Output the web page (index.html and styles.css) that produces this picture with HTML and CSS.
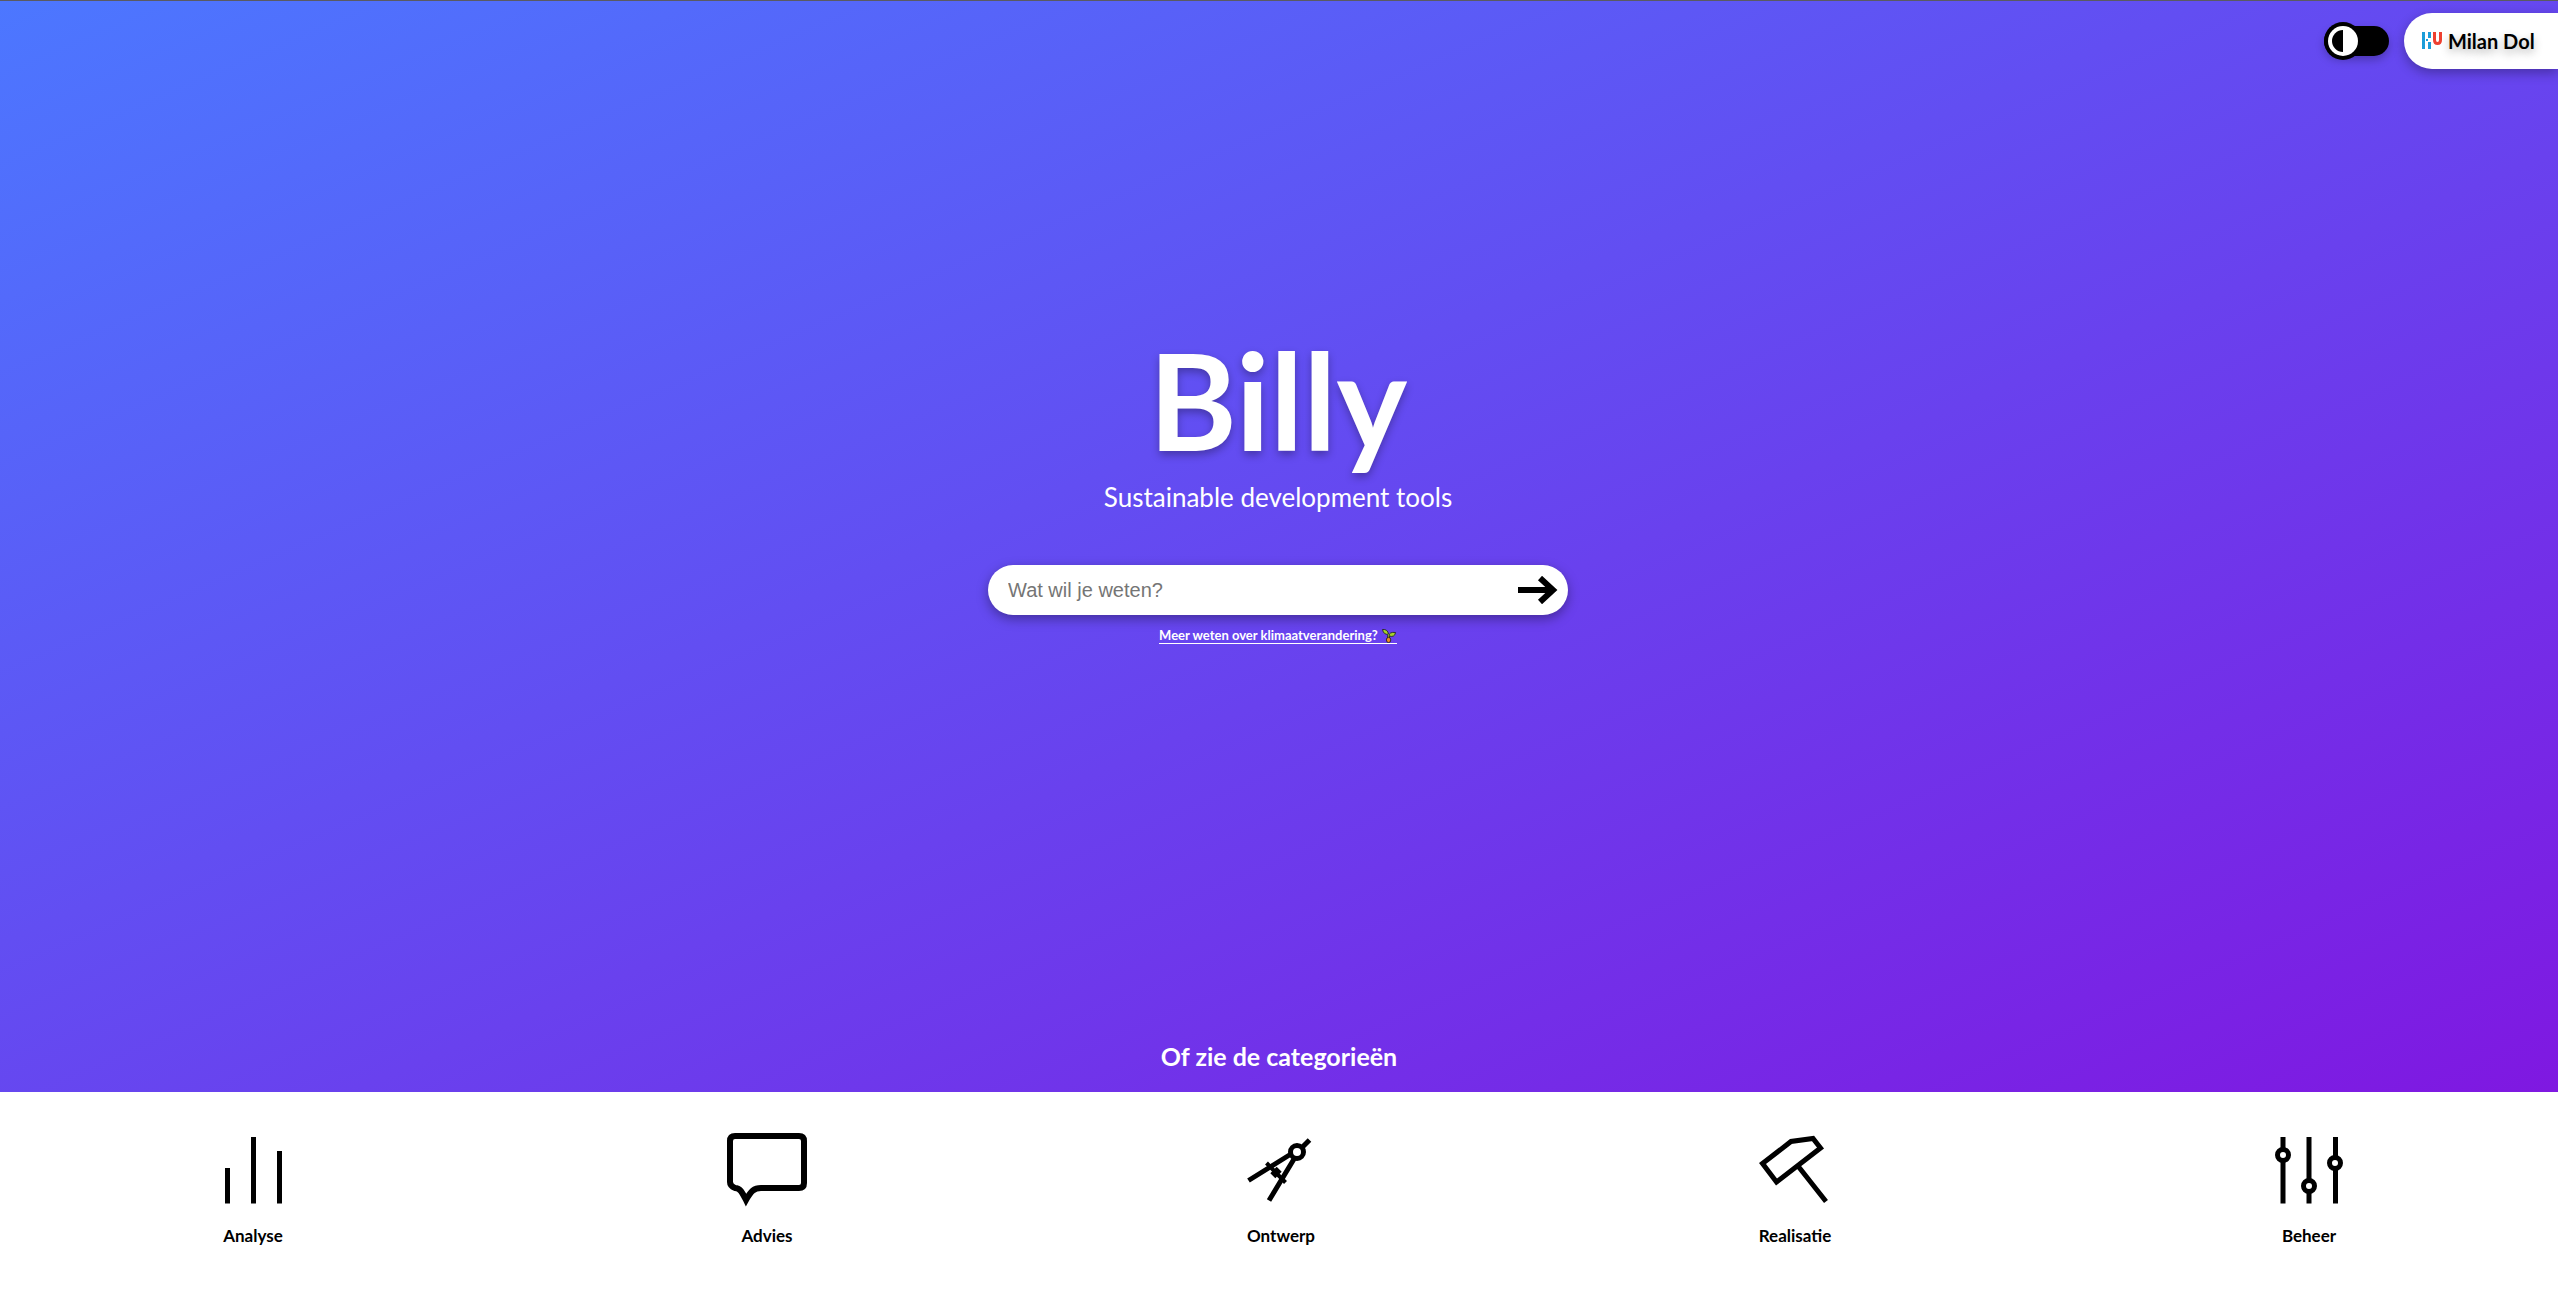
FILE: index.html
```html
<!DOCTYPE html>
<html lang="nl">
<head>
<meta charset="utf-8">
<title>Billy</title>
<meta name="viewport" content="width=device-width, initial-scale=1">
<link rel="stylesheet" href="styles.css">
</head>
<body>
<div class="hero">
  <header class="topbar">
    <label class="toggle">
      <input class="toggle-input" type="checkbox" aria-label="Contrast">
      <svg class="toggle-knob" viewBox="0 0 38 38" aria-hidden="true">
        <circle cx="19" cy="19" r="19"/>
        <circle cx="19" cy="19" r="15" fill="#fff"/>
        <path d="M19 8a11 11 0 0 0 0 22z"/>
      </svg>
    </label>
    <button class="user" type="button">
      <svg class="user-logo" viewBox="0 0 20 18" aria-hidden="true">
        <path d="M0 0h3v17H0zM6 0h3v6H6zM4 7h2v2H4zM6 10h3v7H6z" fill="#1b9dd9"/>
        <path d="M12.500 0v8q0 3.500 3 3.500t3-3.500V0" fill="none" stroke="#ee4030" stroke-width="3"/>
      </svg>
      <span>Milan Dol</span>
    </button>
  </header>
  <main class="intro">
    <h1 class="title">Billy</h1>
    <p class="tagline">Sustainable development tools</p>
    <form class="search">
      <input class="search-input" type="text" placeholder="Wat wil je weten?" aria-label="Wat wil je weten?">
      <button class="search-button" type="button" aria-label="Zoek">
        <svg class="arrow" viewBox="0 0 40 28" aria-hidden="true">
          <path d="M0 14h35M22 2l13 12-13 12" fill="none" stroke="#000" stroke-width="6"/>
        </svg>
      </button>
    </form>
    <a class="more" href="#klimaat">Meer weten over klimaatverandering? <svg class="seedling" viewBox="0 0 16 16" aria-hidden="true">
        <path d="M7.500 12V7" stroke="#222" stroke-width="3"/>
        <path d="M.5.500q6-.5 7 5.500Q2 7 .5.500zM8 8q0-5 7.500-4-1 6-7.500 4z" fill="#a5d32a" stroke="#222"/>
        <path d="M7.500 12V6" stroke="#8fbf26"/>
        <ellipse cx="7.500" cy="12.500" rx="2.500" ry="3" fill="#f08a24" stroke="#222"/>
      </svg></a>
  </main>
  <h2 class="subtitle">Of zie de categorieën</h2>
</div>
<nav class="categories">
  <a class="category" href="#analyse">
    <svg class="category-icon" viewBox="0 0 96 76" aria-hidden="true">
      <path d="M22.500 36v35.500M48.500 5v66.500M74.500 19v52.500"/>
    </svg>
    <span>Analyse</span>
  </a>
  <a class="category" href="#advies">
    <svg class="category-icon" viewBox="0 0 96 76" aria-hidden="true">
      <path stroke-width="6" d="M16 4H80Q85 4 85 9V51Q85 56 80 56H42C35 56 32 59 27 68C23 60 21 56 16 56Q11 54 11 50V9Q11 4 16 4z"/>
    </svg>
    <span>Advies</span>
  </a>
  <a class="category" href="#ontwerp">
    <svg class="category-icon" viewBox="0 0 96 76" aria-hidden="true">
      <path d="M76.500 8L69 15.500M58 22L15.500 48.500M61 27L36 68.500"/>
      <path stroke-width="4" d="M33.500 31L52.500 50.500"/>
      <path stroke-width="9" d="M40.500 38L45.500 43"/>
      <circle cx="64" cy="20" r="6.500" fill="#fff"/>
    </svg>
    <span>Ontwerp</span>
  </a>
  <a class="category" href="#realisatie">
    <svg class="category-icon" viewBox="0 0 96 76" aria-hidden="true">
      <path d="M15.500 31.500L44 9.500L66 6.500L73.500 16L29.500 50zM51 34L79 69.500"/>
    </svg>
    <span>Realisatie</span>
  </a>
  <a class="category" href="#beheer">
    <svg class="category-icon" viewBox="0 0 96 76" aria-hidden="true">
      <path d="M22 5v66.500M48 5v66.500M74.500 5v66.500"/>
      <g fill="#fff">
        <circle cx="22" cy="23" r="5.500"/>
        <circle cx="48" cy="54" r="5.500"/>
        <circle cx="74" cy="31" r="5.500"/>
      </g>
    </svg>
    <span>Beheer</span>
  </a>
</nav>
</body>
</html>
```
FILE: styles.css
```css
* { box-sizing: border-box; }

body {
  margin: 0;
  min-height: 100vh;
  display: flex;
  flex-direction: column;
  font-family: Lato, "Open Sans", sans-serif;
  color: #000;
  background: #fff;
}

.hero {
  flex: 1;
  display: flex;
  flex-direction: column;
  border-top: 1px solid #5a5a62;
  background: linear-gradient(to bottom right, #4c77ff, #7f18e1);
  color: #fff;
}

.topbar {
  display: flex;
  justify-content: flex-end;
  align-items: center;
  gap: 15px;
  padding-top: 12px;
}

.toggle {
  display: flex;
  align-items: center;
  width: 65px;
  height: 30px;
  border-radius: 15px;
  background: #000;
  box-shadow: 0 4px 8px rgba(0, 0, 0, 0.25);
  cursor: pointer;
}

.toggle-input {
  width: 0;
  height: 0;
  margin: 0;
  appearance: none;
}

.toggle-knob {
  flex: none;
  width: 38px;
  height: 38px;
}

.user {
  display: flex;
  align-items: center;
  gap: 6px;
  width: 154px;
  height: 56px;
  padding: 0 0 0 18px;
  border: 0;
  border-radius: 28px 0 0 28px;
  background: #fff;
  color: #000;
  font: 700 20px/24px Lato, "Open Sans", sans-serif;
  white-space: nowrap;
  text-shadow: 0 4px 8px rgba(0, 0, 0, 0.3);
  box-shadow: 0 4px 12px rgba(0, 0, 0, 0.3);
}

.user-logo {
  width: 20px;
  height: 18px;
}

.intro {
  flex: 1;
  display: flex;
  flex-direction: column;
  align-items: center;
  justify-content: center;
  padding: 0 18px 144px 16px;
}

.title {
  margin: 0 0 4px;
  font-size: 134px;
  line-height: 154px;
  font-weight: 700;
  text-shadow: 0 4px 8px rgba(0, 0, 0, 0.3);
}

.tagline {
  margin: 0;
  font-size: 26px;
  line-height: 32px;
}

.search {
  display: flex;
  align-items: center;
  width: 100%;
  max-width: 580px;
  height: 50px;
  margin-top: 52px;
  padding: 0 10px 0 20px;
  border-radius: 25px;
  background: #fff;
  box-shadow: 0 4px 12px rgba(0, 0, 0, 0.35);
}

.search-input {
  flex: 1;
  min-width: 0;
  padding: 0;
  border: 0;
  outline: 0;
  background: none;
  font: 20px/24px "Liberation Sans", Arial, sans-serif;
}

.search-input::placeholder { color: #757575; }

.search-button {
  padding: 0;
  border: 0;
  background: none;
}

.arrow {
  display: block;
  width: 40px;
  height: 28px;
}

.more {
  margin-top: 12px;
  border-bottom: 1px solid #fff;
  color: #fff;
  font-size: 13px;
  line-height: 16px;
  font-weight: 700;
  text-decoration: none;
}

.seedling {
  width: 16px;
  height: 14px;
  fill: none;
  vertical-align: -3px;
}

.subtitle {
  margin: 0;
  padding-bottom: 22px;
  text-align: center;
  font-size: 25px;
  line-height: 28px;
}

.categories {
  display: flex;
  justify-content: space-between;
  padding: 40px 201px 48px 205px;
}

.category {
  display: flex;
  flex-direction: column;
  align-items: center;
  gap: 16px;
  color: #000;
  font-size: 17px;
  line-height: 24px;
  font-weight: 700;
  text-decoration: none;
}

.category-icon {
  width: 96px;
  height: 76px;
  fill: none;
  stroke: #000;
  stroke-width: 5;
}

@media (max-width: 1000px) {
  .categories {
    flex-wrap: wrap;
    justify-content: center;
    gap: 32px;
    padding: 40px 16px;
  }
}
```
